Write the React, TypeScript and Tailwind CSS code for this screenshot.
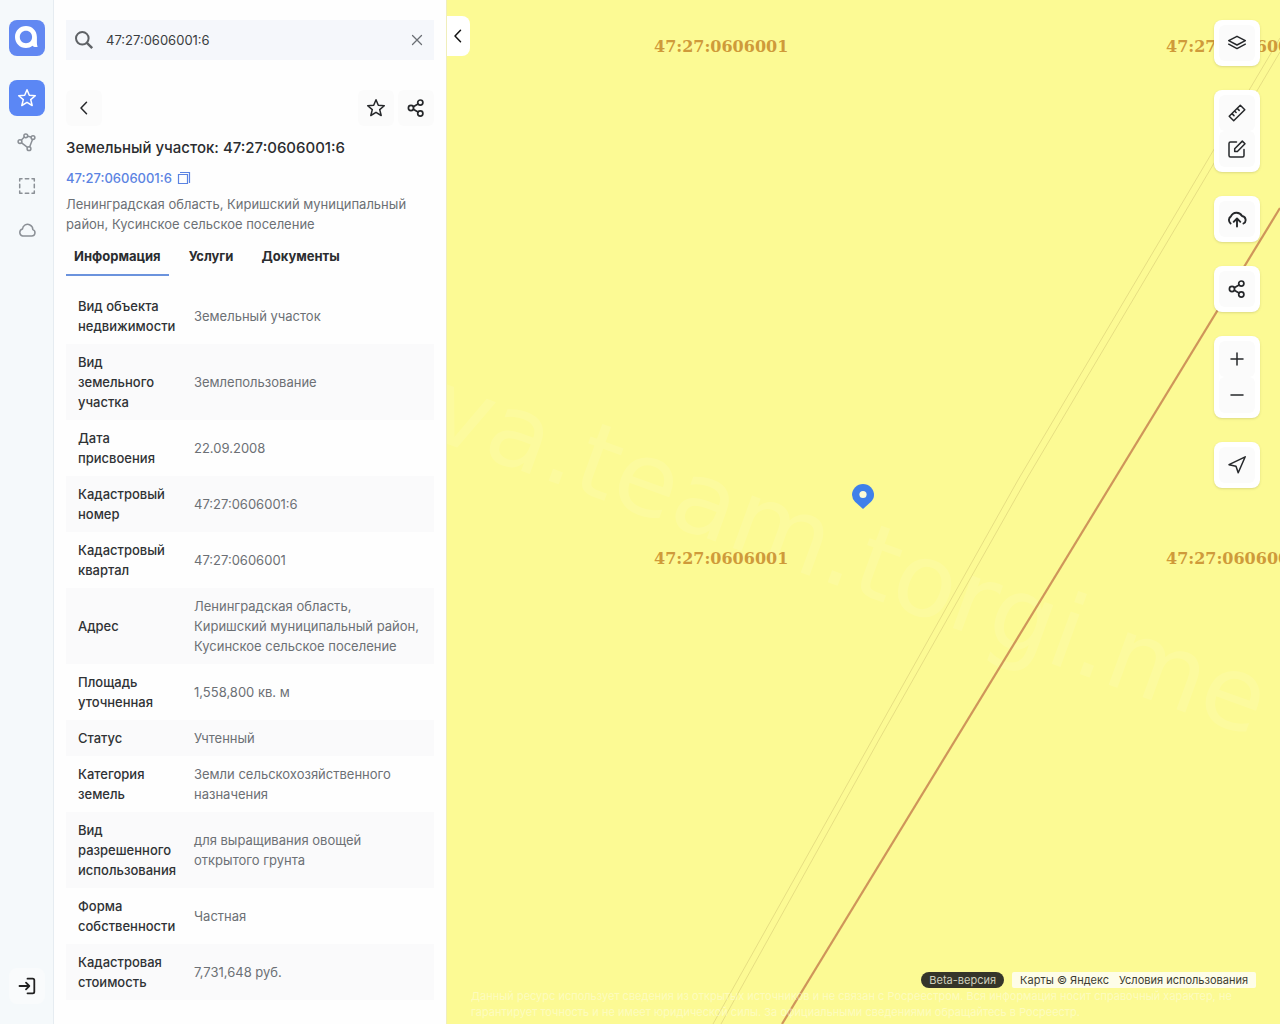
import { useState } from 'react';
import type { ReactNode } from 'react';

const details = [
  { label: 'Вид объекта недвижимости', value: 'Земельный участок' },
  { label: 'Вид земельного участка', value: 'Землепользование' },
  { label: 'Дата присвоения', value: '22.09.2008' },
  { label: 'Кадастровый номер', value: '47:27:0606001:6' },
  { label: 'Кадастровый квартал', value: '47:27:0606001' },
  { label: 'Адрес', value: 'Ленинградская область, Киришский муниципальный район, Кусинское сельское поселение' },
  { label: 'Площадь уточненная', value: '1,558,800 кв. м' },
  { label: 'Статус', value: 'Учтенный' },
  { label: 'Категория земель', value: 'Земли сельскохозяйственного назначения' },
  { label: 'Вид разрешенного использования', value: 'для выращивания овощей открытого грунта' },
  { label: 'Форма собственности', value: 'Частная' },
  { label: 'Кадастровая стоимость', value: '7,731,648 руб.' }
];

const tabs = ['Информация', 'Услуги', 'Документы'];

const quarterLabels = [
  { x: 207, y: 52 },
  { x: 719, y: 52 },
  { x: 207, y: 564 },
  { x: 719, y: 564 }
];

function Icon({ children, className = 'w-5 h-5', strokeWidth = 1.5 }: { children: ReactNode; className?: string; strokeWidth?: number }) {
  return (
    <svg
      viewBox="0 0 20 20"
      className={className}
      fill="none"
      stroke="currentColor"
      strokeWidth={strokeWidth}
      strokeLinecap="round"
      strokeLinejoin="round"
      aria-hidden="true"
    >
      {children}
    </svg>
  );
}

const StarIcon = () => (
  <Icon>
    <path d="M10 1.8l2.3 5.5 6 .4-4.6 3.9 1.5 5.9L10 14.3l-5.2 3.2 1.5-5.9L1.7 7.7l6-.4z" />
  </Icon>
);

const ShareIcon = () => (
  <Icon strokeWidth={1.7}>
    <circle cx="14.3" cy="4.6" r="2.6" />
    <circle cx="5" cy="10" r="2.6" />
    <circle cx="14.3" cy="15.5" r="2.6" />
    <path d="M7.3 8.7L12 5.9M7.3 11.3l4.7 2.8" />
  </Icon>
);

const ChevronIcon = () => (
  <Icon>
    <path d="M12.5 4.2L7 10l5.5 5.8" />
  </Icon>
);

function NavButton({ label, active, children }: { label: string; active?: boolean; children: ReactNode }) {
  return (
    <button
      type="button"
      aria-label={label}
      className={`flex items-center justify-center w-9 h-9 rounded-lg ${active ? 'bg-[#5b87f5] text-white' : 'text-[#8b9096]'}`}
    >
      {children}
    </button>
  );
}

function Sidebar() {
  return (
    <nav className="flex flex-col items-center shrink-0 w-[54px] py-5 bg-[#f5f9fb] shadow-[inset_-1px_0_0_#e6ecf1]">
      <a href="#home" aria-label="На главную" className="block w-9 h-9 mb-6 rounded-lg bg-[#6288f2]">
        <svg viewBox="0 0 36 36" className="w-9 h-9" fill="none">
          <path fill="#fff" fillRule="evenodd" d="M17 6C10.7 6 6 10.9 6 17s4.700 11 11 11c2.600 0 4.600-.8 6.400-2.200 1.200 1.200 3 1.500 5.300 1-.6-1.400-.8-2.600-.8-4.300V17C27.900 10.700 23.200 6 17 6zm0 4.700c3.500 0 6.100 2.700 6.100 6.300s-2.600 6.200-6.100 6.200-6.200-2.600-6.200-6.200 2.700-6.300 6.200-6.300z" />
        </svg>
      </a>
      <div className="flex flex-col gap-2">
        <NavButton label="Избранное" active>
          <StarIcon />
        </NavButton>
        <NavButton label="Объекты">
          <Icon>
            <circle cx="8.8" cy="3.8" r="1.9" />
            <circle cx="16" cy="5.6" r="1.9" />
            <circle cx="3" cy="9.6" r="1.9" />
            <circle cx="12" cy="16.7" r="1.9" />
            <path d="M10.8 4.3l3.2.8M7.3 5.1L4.5 8.1M15.500 7.600l-2.800 7.200M4.600 10.800l5.900 4.600" />
          </Icon>
        </NavButton>
        <NavButton label="Выделение">
          <Icon>
            <path d="M2.700 5V2.700H5M8.300 2.700h3.400M15 2.700h2.300V5M17.300 8.300v3.400M17.300 15v2.300H15M11.700 17.300H8.300M5 17.300H2.700V15M2.700 11.700V8.300" />
          </Icon>
        </NavButton>
        <NavButton label="Облако">
          <Icon>
            <path d="M5.600 16h9a3.300 3.300 0 001.200-6.400A5 5 0 0013 5a5 5 0 00-7.500 4A3.600 3.600 0 005.600 16z" />
          </Icon>
        </NavButton>
      </div>
      <button type="button" aria-label="Войти" className="flex items-center justify-center w-9 h-9 mt-auto rounded-lg bg-[#f9fbfc] text-[#222]">
        <Icon strokeWidth={1.8}>
          <path d="M2.500 10h9.500M9 6.700l3.300 3.300L9 13.300M10.500 2.700h5.200c1 0 1.600.6 1.600 1.600v11.400c0 1-.6 1.600-1.600 1.600h-5.200" />
        </Icon>
      </button>
    </nav>
  );
}

function SquareButton({ label, children }: { label: string; children: ReactNode }) {
  return (
    <button type="button" aria-label={label} className="flex items-center justify-center w-9 h-9 rounded-md bg-[#fbfbfb] text-[#26282b]">
      {children}
    </button>
  );
}

function ObjectPanel() {
  const [query, setQuery] = useState('47:27:0606001:6');
  const [activeTab, setActiveTab] = useState(tabs[0]);

  return (
    <aside className="shrink-0 w-[392px] px-3 pt-5 pb-6 bg-[#fefefe]">
      <form role="search" onSubmit={(e) => e.preventDefault()} className="flex items-center h-10 px-2 bg-[#f5f7fb]">
        <svg viewBox="0 0 20 20" className="w-5 h-5 shrink-0 text-[#5f6266]" fill="none" stroke="currentColor" strokeWidth="2" aria-hidden="true">
          <circle cx="8.3" cy="8.3" r="6.3" />
          <path d="M12.9 12.9l5.3 5.3" strokeWidth="2.4" />
        </svg>
        <input
          type="text"
          aria-label="Поиск"
          value={query}
          onChange={(e) => setQuery(e.target.value)}
          className="flex-1 min-w-0 px-3 text-[13px] leading-5 text-[#3a3d40] bg-transparent outline-none"
        />
        <button type="button" aria-label="Очистить" onClick={() => setQuery('')} className="text-[#6b6f74]">
          <Icon className="w-[18px] h-[18px]" strokeWidth={1.4}>
            <path d="M5 5l10 10M15 5L5 15" />
          </Icon>
        </button>
      </form>

      <div className="flex gap-1 mt-[30px]">
        <SquareButton label="Назад"><ChevronIcon /></SquareButton>
        <div className="flex-1" />
        <SquareButton label="В избранное"><StarIcon /></SquareButton>
        <SquareButton label="Поделиться"><ShareIcon /></SquareButton>
      </div>

      <h1 className="mt-2.5 text-[15px] leading-6 font-medium text-[#2b2d30]">Земельный участок: 47:27:0606001:6</h1>
      <div className="flex items-center gap-1 mt-2 text-[13px] leading-5 font-medium text-[#5b83e2]">
        <a href="#object">47:27:0606001:6</a>
        <button type="button" aria-label="Скопировать">
          <svg viewBox="0 0 16 16" className="w-4 h-4" fill="none" stroke="currentColor" strokeWidth="1.2" aria-hidden="true">
            <path d="M2.500 4.500h9v9h-9zM4 2.500h9.500V13" />
          </svg>
        </button>
      </div>
      <p className="mt-1.5 text-[13px] leading-5 text-[#6c7075]">
        Ленинградская область, Киришский муниципальный район, Кусинское сельское поселение
      </p>

      <div role="tablist" className="flex gap-3 mt-3">
        {tabs.map((tab) => (
          <button
            key={tab}
            type="button"
            role="tab"
            aria-selected={activeTab === tab}
            onClick={() => setActiveTab(tab)}
            className={`px-2 pb-2 text-[13px] leading-5 font-bold text-[#2b2d30] border-b-2 ${activeTab === tab ? 'border-[#6b93dd]' : 'border-transparent'}`}
          >
            {tab}
          </button>
        ))}
      </div>

      <table className="w-full mt-3 table-fixed text-[13px] leading-5">
        <tbody>
          {details.map((row) => (
            <tr key={row.label} className="even:bg-[#fafafb]">
              <th scope="row" className="w-[116px] py-2 pl-3 pr-1 text-left font-medium text-[#2f3235]">{row.label}</th>
              <td className="py-2 pl-3 pr-3 text-[#6c7075]">{row.value}</td>
            </tr>
          ))}
        </tbody>
      </table>
    </aside>
  );
}

function ToolGroup({ children }: { children: ReactNode }) {
  return <div className="flex flex-col p-[5px] bg-white rounded-lg shadow-sm">{children}</div>;
}

function MapTools() {
  return (
    <div className="absolute top-5 right-5 flex flex-col gap-6">
      <ToolGroup>
        <SquareButton label="Слои">
          <Icon>
            <path d="M10 3.300L18.300 7.700 10 12 1.700 7.700zM1.700 11.200L10 15.600l8.300-4.400" />
          </Icon>
        </SquareButton>
      </ToolGroup>
      <ToolGroup>
        <SquareButton label="Линейка">
          <Icon>
            <path d="M2.200 13.300L13.300 2.200l4.500 4.500L6.700 17.800zM5 10.600l2 2M7.600 8l1.500 1.500M10.200 5.400l2 2" />
          </Icon>
        </SquareButton>
        <SquareButton label="Рисование">
          <Icon>
            <path d="M9.500 3H3.500A1.500 1.500 0 002 4.500v12A1.500 1.500 0 003.500 18h12a1.500 1.500 0 001.500-1.500v-6M7.700 12.500V9.700l7.600-7.600 2.700 2.700-7.600 7.700z" />
          </Icon>
        </SquareButton>
      </ToolGroup>
      <ToolGroup>
        <SquareButton label="Загрузить">
          <Icon strokeWidth={1.9}>
            <path d="M3.600 14.400a4.300 4.300 0 01.3-7A6.200 6.200 0 0115 7a4 4 0 011.500 7.500M10 17.500V10M6.700 12.800L10 9.500l3.300 3.300" />
          </Icon>
        </SquareButton>
      </ToolGroup>
      <ToolGroup>
        <SquareButton label="Поделиться картой"><ShareIcon /></SquareButton>
      </ToolGroup>
      <ToolGroup>
        <SquareButton label="Приблизить">
          <Icon>
            <path d="M10 4v12M4 10h12" />
          </Icon>
        </SquareButton>
        <SquareButton label="Отдалить">
          <Icon>
            <path d="M4 10h12" />
          </Icon>
        </SquareButton>
      </ToolGroup>
      <ToolGroup>
        <SquareButton label="Моё местоположение">
          <Icon>
            <path d="M18.200 1.800L2 9.700l7 1.600 2.200 6.500z" />
          </Icon>
        </SquareButton>
      </ToolGroup>
    </div>
  );
}

function CadastralMap() {
  return (
    <main className="relative flex-1 min-w-0 overflow-hidden bg-[#fcfa94] border-l border-[#f0eebb]">
      <svg viewBox="0 0 833 1024" preserveAspectRatio="xMinYMin slice" className="absolute inset-0 w-full h-full" aria-label="Карта">
        <text
          x="-24"
          y="435"
          transform="rotate(20 -24 435)"
          fontSize="102"
          fill="#fff"
          fillOpacity="0.1"
          className="font-['DejaVu_Sans']"
        >
          va.team.torgi.me
        </text>
        <g stroke="#e6de82" strokeWidth="1">
          <path d="M833 38L571 480 433 726 266 1024" fill="none" />
          <path d="M833 52L579 480 433 738 274 1024" fill="none" />
        </g>
        <path d="M833 208L335 1024" stroke="#cf955a" strokeWidth="2.2" />
        <g fill="#cf9a3a" fontSize="16" fontWeight="700" className="font-['DejaVu_Serif']">
          {quarterLabels.map((pos) => (
            <text key={`${pos.x}-${pos.y}`} x={pos.x} y={pos.y}>47:27:0606001</text>
          ))}
        </g>
        <path d="M416 509l-8-7.200A11 11 0 01405 495a11 11 0 0122 0c0 2.700-1.200 5-3 6.800z" fill="#3f80ea" />
        <circle cx="416" cy="494.5" r="3.6" fill="#fdfbd8" />
      </svg>

      <button type="button" aria-label="Свернуть панель" className="absolute top-4 -left-px flex items-center justify-center w-6 h-10 rounded-r-lg bg-white text-[#111]">
        <ChevronIcon />
      </button>

      <MapTools />

      <div className="absolute inset-x-6 bottom-1 text-[11px]">
        <div className="flex justify-end gap-2 leading-4">
          <span className="px-2 rounded-full bg-[#35352a] text-[#d0d0bd]">Beta-версия</span>
          <span className="flex gap-2.5 px-2 rounded-xs bg-[#fefde8] text-[#3c3c32]">
            <a href="#maps">Карты © Яндекс</a>
            <a href="#terms">Условия использования</a>
          </span>
        </div>
        <p className="leading-4 text-white/40">
          Данный ресурс использует сведения из открытых источников и не связан с Росреестром. Вся информация носит справочный характер, не гарантирует точность и не имеет юридической силы. За официальными сведениями обращайтесь в Росреестр.
        </p>
      </div>
    </main>
  );
}

export default function App() {
  return (
    <div className="flex min-h-screen bg-white font-[Inter,sans-serif]">
      <Sidebar />
      <ObjectPanel />
      <CadastralMap />
    </div>
  );
}
